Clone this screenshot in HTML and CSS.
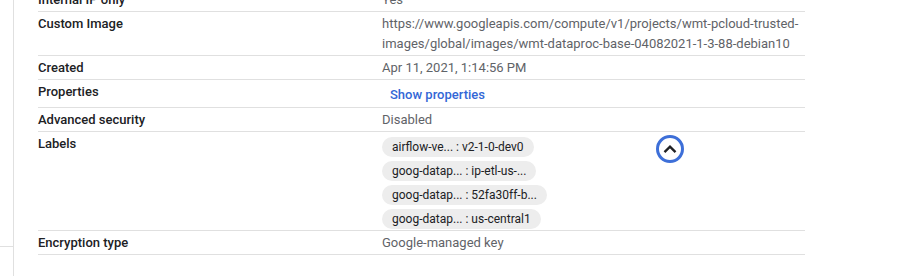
FILE: index.html
```html
<!DOCTYPE html>
<html lang="en">
<head>
    <meta charset="UTF-8">
    <meta name="viewport" content="width=device-width, initial-scale=1.0">
    <title>VM instance details</title>
    <link rel="stylesheet" href="styles.css">
</head>
<body>
    <div class="page">
        <div class="side">
            <div class="side-block"></div>
        </div>
        <div class="details">
            <div class="row">
                <div class="label">Internal IP only</div>
                <div class="value">Yes</div>
            </div>
            <div class="row">
                <div class="label">Custom Image</div>
                <div class="value">https://www.googleapis.com/compute/v1/projects/wmt-pcloud-trusted-images/global/images/wmt-dataproc-base-04082021-1-3-88-debian10</div>
            </div>
            <div class="row">
                <div class="label">Created</div>
                <div class="value">Apr 11, 2021, 1:14:56 PM</div>
            </div>
            <div class="row row-button">
                <div class="label">Properties</div>
                <div class="value"><button class="link-btn">Show properties</button></div>
            </div>
            <div class="row">
                <div class="label">Advanced security</div>
                <div class="value">Disabled</div>
            </div>
            <div class="row">
                <div class="label">Labels</div>
                <div class="value labels">
                    <div class="chips">
                        <span class="chip">airflow-ve... : v2-1-0-dev0</span>
                        <span class="chip">goog-datap... : ip-etl-us-...</span>
                        <span class="chip">goog-datap... : 52fa30ff-b...</span>
                        <span class="chip">goog-datap... : us-central1</span>
                    </div>
                    <button class="collapse" aria-label="Collapse labels">
                        <svg width="22" height="22" viewBox="0 0 24 24"><path d="M6 15.5l6-6 6 6" fill="none" stroke="#202124" stroke-width="2.6"/></svg>
                    </button>
                </div>
            </div>
            <div class="row">
                <div class="label">Encryption type</div>
                <div class="value">Google-managed key</div>
            </div>
        </div>
    </div>
</body>
</html>
```

FILE: styles.css
```css
body {
    margin: 0;
    font-family: Roboto, "Liberation Sans", Arial, sans-serif;
    font-size: 13px;
    color: #202124;
    background-color: #fff;
}

.page {
    display: flex;
    min-height: 276px;
}

.side {
    width: 13px;
    border-right: 1px solid #e0e0e0;
}

.side-block {
    height: 246px;
    border-bottom: 1px solid #e0e0e0;
}

.details {
    width: 767px;
    margin-left: 24px;
    margin-top: -12px;
}

.row {
    display: flex;
    padding: 2px 0 1px;
    line-height: 20px;
    border-bottom: 1px solid #e0e0e0;
}

.label {
    width: 344px;
    flex-shrink: 0;
    font-weight: 500;
}

.value {
    flex: 1;
    color: #5f6368;
}

.row-button {
    padding: 2px 0 1px;
}

.link-btn {
    height: 24px;
    padding: 0 8px;
    border: none;
    background: none;
    font-family: inherit;
    font-size: 13px;
    font-weight: 500;
    color: #3367d6;
    cursor: pointer;
}

.labels {
    display: flex;
    align-items: flex-start;
}

.chips {
    width: 274px;
    display: flex;
    flex-direction: column;
    align-items: flex-start;
    gap: 4px;
    padding-top: 3px;
}

.chip {
    height: 20px;
    line-height: 20px;
    padding: 0 10px;
    border-radius: 10px;
    background-color: #ededed;
    color: #202124;
    font-size: 12px;
}

.collapse {
    width: 28px;
    height: 28px;
    margin-top: 1px;
    padding: 0;
    border: 3px solid #3d6fd8;
    border-radius: 50%;
    background: #fff;
    display: flex;
    align-items: center;
    justify-content: center;
    cursor: pointer;
}
```
